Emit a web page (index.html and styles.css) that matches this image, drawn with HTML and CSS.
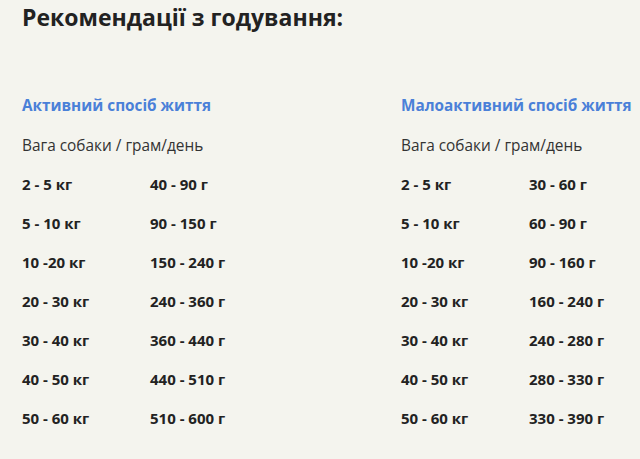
FILE: index.html
```html
<!DOCTYPE html>
<html lang="uk">
<head>
<meta charset="utf-8">
<link rel="stylesheet" href="styles.css">
</head>
<body>
<div class="page">
  <h1 class="title">Рекомендації з годування:</h1>
  <div class="sections">
    <section class="section">
      <h2 class="heading">Активний спосіб життя</h2>
      <p class="sub">Вага собаки / грам/день</p>
      <div class="rows">
        <div class="row"><span>2 - 5 кг</span><span>40 - 90 г</span></div>
        <div class="row"><span>5 - 10 кг</span><span>90 - 150 г</span></div>
        <div class="row"><span>10 -20 кг</span><span>150 - 240 г</span></div>
        <div class="row"><span>20 - 30 кг</span><span>240 - 360 г</span></div>
        <div class="row"><span>30 - 40 кг</span><span>360 - 440 г</span></div>
        <div class="row"><span>40 - 50 кг</span><span>440 - 510 г</span></div>
        <div class="row"><span>50 - 60 кг</span><span>510 - 600 г</span></div>
      </div>
    </section>
    <section class="section">
      <h2 class="heading">Малоактивний спосіб життя</h2>
      <p class="sub">Вага собаки / грам/день</p>
      <div class="rows">
        <div class="row"><span>2 - 5 кг</span><span>30 - 60 г</span></div>
        <div class="row"><span>5 - 10 кг</span><span>60 - 90 г</span></div>
        <div class="row"><span>10 -20 кг</span><span>90 - 160 г</span></div>
        <div class="row"><span>20 - 30 кг</span><span>160 - 240 г</span></div>
        <div class="row"><span>30 - 40 кг</span><span>240 - 280 г</span></div>
        <div class="row"><span>40 - 50 кг</span><span>280 - 330 г</span></div>
        <div class="row"><span>50 - 60 кг</span><span>330 - 390 г</span></div>
      </div>
    </section>
  </div>
</div>
</body>
</html>
```

FILE: styles.css
```css
html, body {
  margin: 0;
  padding: 0;
  background: #f4f4ee;
}
body {
  font-family: "Open Sans", "Noto Sans", sans-serif;
  color: #222;
  overflow: hidden;
}
.page {
  padding: 2px 0 0 22px;
}
.title {
  margin: 0;
  font-size: 23px;
  line-height: 30px;
  font-weight: 700;
  color: #222;
}
.sections {
  display: grid;
  grid-template-columns: 379px 1fr;
  margin-top: 63px;
}
.heading {
  margin: 0;
  font-size: 15.3px;
  line-height: 20px;
  font-weight: 700;
  color: #4a80d8;
  white-space: nowrap;
}
.sub {
  margin: 21px 0 0;
  font-size: 15.4px;
  line-height: 20px;
  font-weight: 400;
  color: #333;
}
.rows {
  display: flex;
  flex-direction: column;
  gap: 19px;
  margin-top: 18px;
}
.row {
  display: grid;
  grid-template-columns: 128px auto;
  font-size: 15px;
  line-height: 20px;
  font-weight: 700;
  color: #222;
}
```
